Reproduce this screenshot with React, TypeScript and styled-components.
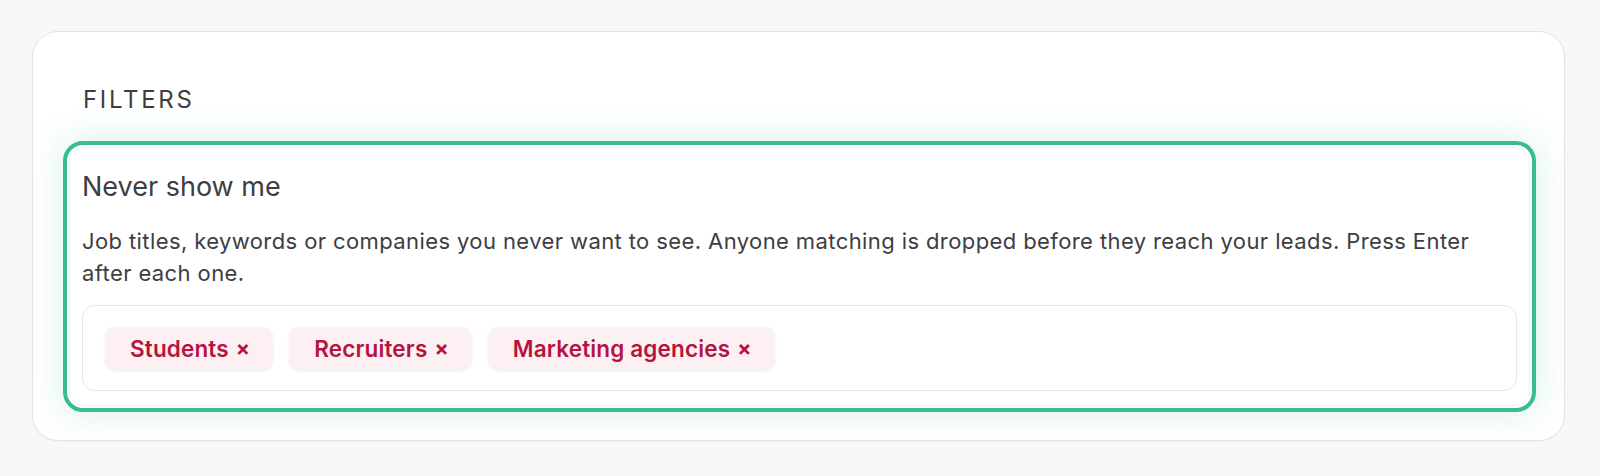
import React from "react";
import styled, { createGlobalStyle } from "styled-components";

const Global = createGlobalStyle`
  html, body { margin: 0; padding: 0; background: #f8f8f8; }
  body { font-family: Inter, "Noto Sans", sans-serif; color: #3f3f46; }
`;

const Page = styled.div`
  padding: 31px 35px 0 32px;
  height: 476px;
  box-sizing: border-box;
`;

const Card = styled.section`
  background: #ffffff;
  border: 1px solid #e4e4e4;
  border-radius: 26px;
  padding: 53px 28px 28px 30px;
  box-shadow: 0 1px 2px rgba(0,0,0,0.03);
`;

const SectionLabel = styled.h2`
  margin: 0 0 26px 20px;
  font-size: 24px;
  font-weight: 400;
  letter-spacing: 2.7px;
  text-transform: uppercase;
  color: #3d3d42;
  line-height: 30px;
`;

const FilterBox = styled.div`
  position: relative;
  border: 4px solid #36bf8b;
  border-radius: 20px;
  padding: 26px 15px 17px 15px;
  box-shadow: 0 0 30px 6px rgba(54, 191, 139, 0.15);
  background: #fff;
  &::after {
    content: "";
    position: absolute;
    inset: 2px;
    border-radius: 15px;
    border: 1px solid rgba(0,0,0,0.05);
    pointer-events: none;
  }
`;

const Title = styled.h3`
  margin: 0;
  font-size: 27px;
  font-weight: 400;
  color: #3d3d42;
  line-height: 32px;
`;

const Description = styled.p`
  margin: 23px 0 16px;
  font-size: 22px;
  letter-spacing: 0.4px;
  line-height: 31.5px;
  color: #3d3d42;
`;

const TagInput = styled.div`
  display: flex;
  flex-wrap: wrap;
  gap: 16px;
  align-items: center;
  border: 1.5px solid #e6e6e6;
  border-radius: 13px;
  padding: 21px 20px 20px 22px;
`;

const Chip = styled.span`
  display: inline-flex;
  align-items: center;
  gap: 7px;
  height: 43px;
  padding: 0 23px 0 25px;
  border-radius: 10px;
  background: #fdf0f2;
  color: #b5143f;
  font-size: 22.5px;
  letter-spacing: 0.15px;
  font-weight: 600;
  box-shadow: 0 1px 3px rgba(0,0,0,0.07);
  box-sizing: border-box;
`;

const Remove = styled.span`
  font-size: 21px;
  font-weight: 700;
`;

const tags = ["Students", "Recruiters", "Marketing agencies"];

export default function App() {
  return (
    <>
      <Global />
      <Page>
        <Card>
          <SectionLabel>Filters</SectionLabel>
          <FilterBox>
            <Title>Never show me</Title>
            <Description>
              Job titles, keywords or companies you never want to see. Anyone matching is dropped before they reach your leads. Press Enter after each one.
            </Description>
            <TagInput>
              {tags.map((t) => (
                <Chip key={t}>
                  {t}
                  <Remove>×</Remove>
                </Chip>
              ))}
            </TagInput>
          </FilterBox>
        </Card>
      </Page>
    </>
  );
}
